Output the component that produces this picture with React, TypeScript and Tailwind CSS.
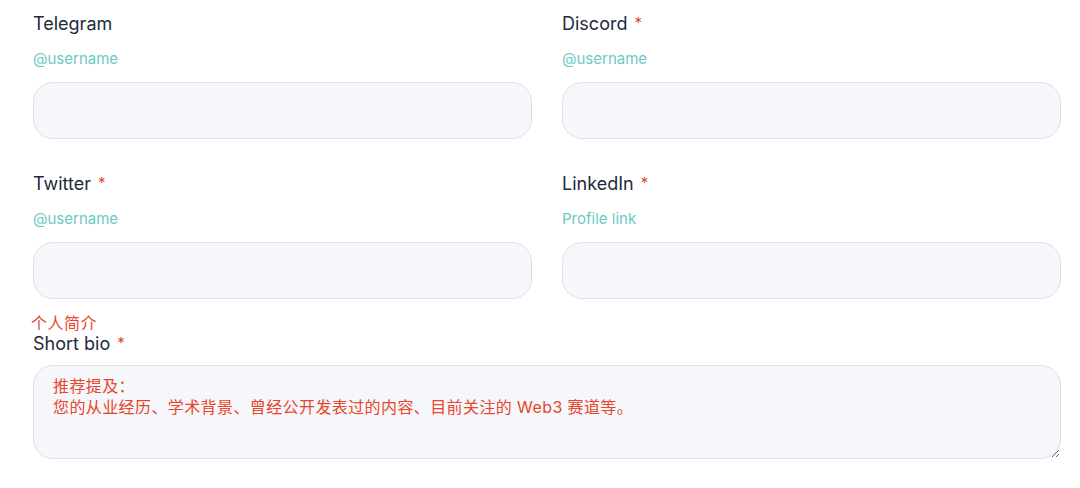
import React from 'react';

function Req() {
  return <span className="relative -top-[2px] ml-[7px] text-[15px] leading-none text-[#e0463a]">*</span>;
}

function Field({ label, hint, required }: { label: string; hint: string; required?: boolean }) {
  return (
    <div className="flex flex-col">
      <label className="text-[18px] leading-[28px] text-[#232a3b]">
        {label}
        {required && <Req />}
      </label>
      <span className="mt-[10px] text-[15px] leading-[22px] text-[#6ccac4]">{hint}</span>
      <input
        type="text"
        className="mt-[12px] h-[57px] w-full rounded-[20px] border border-[#dde0ea] bg-[#f6f7fa] px-5 outline-none"
      />
    </div>
  );
}

export default function App() {
  return (
    <div
      className="min-h-screen bg-white pt-[10px] pl-[33px] pr-[19px]"
      style={{ fontFamily: 'Inter, "Noto Sans CJK SC", sans-serif' }}
    >
      <div className="grid grid-cols-2 gap-x-[30px] gap-y-[31px]">
        <Field label="Telegram" hint="@username" />
        <Field label="Discord" hint="@username" required />
        <Field label="Twitter" hint="@username" required />
        <Field label="LinkedIn" hint="Profile link" required />
      </div>
      <div className="mt-[15px] flex flex-col">
        <span className="-ml-[2px] text-[16px] leading-[18px] tracking-[0.5px] text-[#e8452c]">个人简介</span>
        <label className="text-[18px] leading-[23px] text-[#232a3b]">
          Short bio
          <Req />
        </label>
        <textarea
          className="mt-[10px] h-[94px] w-full rounded-[20px] border border-[#dde0ea] bg-[#f6f7fa] px-[19px] pt-[10px] pb-[8px] text-[16px] leading-[21px] tracking-[0.4px] text-[#e8452c] placeholder:text-[#e8452c] outline-none"
          placeholder={'推荐提及：\n您的从业经历、学术背景、曾经公开发表过的内容、目前关注的 Web3 赛道等。'}
        />
      </div>
    </div>
  );
}
